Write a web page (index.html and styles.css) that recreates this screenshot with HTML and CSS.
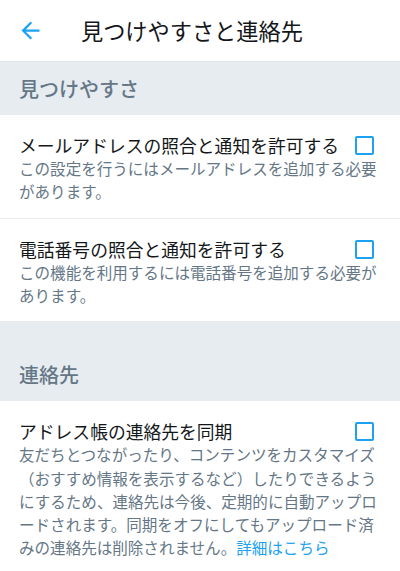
FILE: index.html
```html
<!DOCTYPE html>
<html lang="ja">
<head>
  <meta charset="UTF-8" />
  <meta name="viewport" content="width=device-width, initial-scale=1.0"/>
  <title>見つけやすさと連絡先</title>
  <link rel="stylesheet" href="styles.css">
</head>
<body>
  <header class="topbar">
    <svg class="back" width="27" height="27" viewBox="0 0 24 24">
      <path d="M20 11H7.83l5.59-5.59L12 4l-8 8 8 8 1.41-1.41L7.83 13H20v-2z" fill="#1da1f2"/>
    </svg>
    <h1>見つけやすさと連絡先</h1>
  </header>

  <h2 class="group-title">見つけやすさ</h2>

  <div class="row">
    <div class="row-head">
      <span class="row-title">メールアドレスの照合と通知を許可する</span>
      <span class="check"></span>
    </div>
    <p class="row-desc">この設定を行うにはメールアドレスを追加する必要があります。</p>
  </div>

  <div class="row last">
    <div class="row-head">
      <span class="row-title">電話番号の照合と通知を許可する</span>
      <span class="check"></span>
    </div>
    <p class="row-desc">この機能を利用するには電話番号を追加する必要があります。</p>
  </div>

  <h2 class="group-title spaced">連絡先</h2>

  <div class="row last">
    <div class="row-head">
      <span class="row-title">アドレス帳の連絡先を同期</span>
      <span class="check"></span>
    </div>
    <p class="row-desc">友だちとつながったり、コンテンツをカスタマイズ（おすすめ情報を表示するなど）したりできるようにするため、連絡先は今後、定期的に自動アップロードされます。同期をオフにしてもアップロード済みの連絡先は削除されません。<a href="#" class="more">詳細はこちら</a></p>
  </div>
</body>
</html>
```

FILE: styles.css
```css
body {
  margin: 0;
  font-family: 'Noto Sans CJK JP', sans-serif;
  background: #fff;
  color: #14171a;
}
.topbar {
  display: flex;
  align-items: center;
  height: 61px;
  padding-left: 17px;
  border-bottom: 1px solid #e1e8ed;
}
.back {
  display: block;
  flex-shrink: 0;
}
h1 {
  margin: 0 0 0 37px;
  font-size: 22.2px;
  font-weight: normal;
  line-height: 1;
}
.group-title {
  display: flex;
  align-items: center;
  height: 53px;
  margin: 0;
  padding-left: 19px;
  background: #e6ecf0;
  color: #657786;
  font-size: 20px;
  font-weight: 500;
}
.group-title.spaced {
  height: 80px;
  padding-top: 27px;
  box-sizing: border-box;
}
.row {
  padding: 19px 19px 14px;
  border-bottom: 1px solid #e6ecf0;
}
.row.last {
  border-bottom: none;
}
.row-head {
  display: flex;
  align-items: center;
  justify-content: space-between;
  line-height: 23.2px;
}
.row-title {
  font-size: 17.8px;
}
.check {
  width: 19px;
  height: 19px;
  margin-right: 7px;
  box-sizing: border-box;
  border: 2px solid #1da1f2;
  border-radius: 2px;
}
.row-desc {
  margin: 0;
  font-size: 15.56px;
  line-height: 23.2px;
  color: #657786;
}
.more {
  color: #1da1f2;
  text-decoration: none;
}
```
